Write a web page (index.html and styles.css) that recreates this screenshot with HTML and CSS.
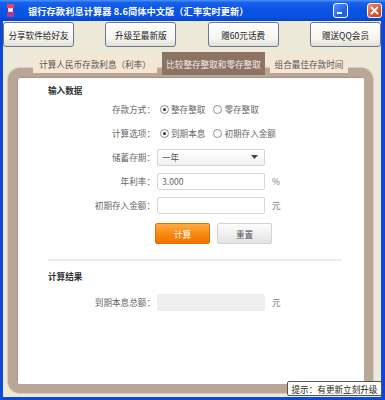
FILE: index.html
```html
<!DOCTYPE html>
<html lang="zh-CN">
<head>
<meta charset="utf-8">
<title>银行存款利息计算器</title>
<link rel="stylesheet" href="styles.css">
</head>
<body>
<div class="window">
  <div class="titlebar">
    <svg class="app-icon" viewBox="0 0 7 13" width="7" height="13">
      <rect x="0" y="0" width="7" height="4" fill="#e8485a"/>
      <rect x="1" y="4" width="5" height="4" fill="#f7c6d6"/>
      <rect x="0" y="8" width="7" height="5" fill="#b23a8c"/>
      <rect x="2" y="5" width="3" height="2" fill="#ffffff"/>
    </svg>
    <span class="title">银行存款利息计算器 8.6简体中文版（汇率实时更新）</span>
    <div class="win-btns">
      <span class="win-btn min"><svg viewBox="0 0 13 13" width="13" height="13"><rect x="3" y="8" width="5" height="2" fill="#fff"/></svg></span>
      <span class="win-btn close"><svg viewBox="0 0 13 13" width="13" height="13"><path d="M3.5 3.5 L9.5 9.5 M9.5 3.5 L3.5 9.5" stroke="#fff" stroke-width="1.8" stroke-linecap="round"/></svg></span>
    </div>
  </div>
  <div class="client">
    <div class="toolbar">
      <button class="tool-btn">分享软件给好友</button>
      <button class="tool-btn">升级至最新版</button>
      <button class="tool-btn">赠60元话费</button>
      <button class="tool-btn">赠送QQ会员</button>
    </div>
    <div class="tabs">
      <div class="tab tab-wide">计算人民币存款利息（利率）</div>
      <div class="tab tab-active">比较整存整取和零存整取</div>
      <div class="tab tab-narrow">组合最佳存款时间</div>
    </div>
    <div class="panel">
      <div class="section-title">输入数据</div>
      <div class="form">
        <div class="label">存款方式：</div>
        <div class="radios">
          <span class="radio checked"><i></i>整存整取</span>
          <span class="radio"><i></i>零存整取</span>
        </div>
        <div class="label">计算选项：</div>
        <div class="radios">
          <span class="radio checked"><i></i>到期本息</span>
          <span class="radio"><i></i>初期存入金额</span>
        </div>
        <div class="label">储蓄存期：</div>
        <div class="select"><span>一年</span><svg viewBox="0 0 7 4" width="7" height="4"><path d="M0 0 H7 L3.5 4 Z" fill="#444"/></svg></div>
        <div class="label">年利率：</div>
        <div class="with-unit"><span class="input">3.000</span><span class="unit">%</span></div>
        <div class="label">初期存入金额：</div>
        <div class="with-unit"><span class="input"></span><span class="unit">元</span></div>
      </div>
      <div class="actions">
        <span class="btn btn-primary">计算</span>
        <span class="btn btn-default">重置</span>
      </div>
      <div class="divider"></div>
      <div class="section-title result-title">计算结果</div>
      <div class="form result-form">
        <div class="label">到期本息总额：</div>
        <div class="with-unit"><span class="input input-readonly"></span><span class="unit">元</span></div>
      </div>
    </div>
  </div>
  <div class="tip">提示：有更新立刻升级</div>
</div>
</body>
</html>
```
FILE: styles.css
```css
* { box-sizing: border-box; }
html, body { margin: 0; padding: 0; }
body {
  width: 385px;
  height: 400px;
  overflow: hidden;
  font-family: "Noto Sans CJK SC", "Noto Sans", sans-serif;
  font-size: 8.6px;
  line-height: 12px;
  color: #555;
  background: #fff;
}
.window {
  position: relative;
  width: 385px;
  height: 400px;
  display: flex;
  flex-direction: column;
}
.titlebar {
  flex: none;
  height: 21px;
  display: flex;
  align-items: center;
  padding-left: 7px;
  background: linear-gradient(to bottom, #4d93f7 0%, #1a62ea 12%, #0a54e4 45%, #0a52e0 80%, #0843cf 100%);
}
.app-icon { display: block; }
.title {
  margin-left: 14px;
  color: #fff;
  font-size: 9.2px;
  font-weight: bold;
  white-space: nowrap;
  letter-spacing: 0.1px;
}
.win-btns {
  margin-left: auto;
  display: flex;
  gap: 19px;
  padding-right: 3px;
}
.win-btn {
  width: 15px;
  height: 15px;
  border: 1px solid #fff;
  border-radius: 3px;
  display: flex;
}
.win-btn.min { background: linear-gradient(135deg, #5a92f8, #2563e6 60%, #1c56d8); }
.win-btn.close { background: linear-gradient(135deg, #f08a6e, #dc5a38 55%, #c3401f); }
.client {
  flex: 1;
  display: flex;
  flex-direction: column;
  background: #ece9d8;
  border-left: 3px solid #0f47d9;
  border-right: 4px solid #0f47d9;
  border-bottom: 3px solid #0f47d9;
}
.toolbar {
  flex: none;
  height: 26px;
  padding-top: 1px;
  display: flex;
  justify-content: space-between;
}
.tool-btn {
  width: 71px;
  height: 25px;
  padding: 0;
  font: inherit;
  color: #222;
  border: 1px solid #6a7892;
  border-radius: 3px;
  background: linear-gradient(to bottom, #ffffff 0%, #f5f4ee 70%, #e2ded0 100%);
}
.tabs {
  position: relative;
  z-index: 1;
  flex: none;
  height: 23px;
  margin-top: 5px;
  padding-left: 30px;
  display: flex;
  align-items: center;
}
.tab {
  height: 18px;
  display: flex;
  align-items: center;
  justify-content: center;
  background: #f5e7d4;
  color: #555;
  white-space: nowrap;
}
.tab-wide { width: 124px; }
.tab-active {
  width: 103px;
  height: 23px;
  margin-left: 5px;
  background: #8c7364;
  color: #f2ebe4;
}
.tab-narrow { width: 78px; margin-left: 5px; }
.panel {
  flex: 1;
  margin: -7px 8px 4px 5px;
  border: 9px solid #b9a696;
  border-radius: 12px;
  background: #fff;
  box-shadow: 0 0 0 1px #d8ccbf, inset 1px 1px 0 #a9937f;
}
.section-title {
  padding: 7px 0 0 31px;
  font-weight: bold;
  color: #333;
}
.form {
  display: grid;
  grid-template-columns: 138px auto;
  column-gap: 2px;
  grid-auto-rows: 24px;
  align-items: center;
  margin-top: 1px;
}
.label {
  text-align: right;
  color: #666;
  white-space: nowrap;
}
.radios {
  display: flex;
  align-items: center;
  gap: 8px;
  padding-left: 3px;
  color: #666;
}
.radio {
  display: flex;
  align-items: center;
  gap: 2px;
}
.radio i {
  width: 9px;
  height: 9px;
  border: 1px solid #8c8c8c;
  border-radius: 50%;
  display: flex;
  align-items: center;
  justify-content: center;
  background: #fff;
}
.radio.checked i::after {
  content: "";
  width: 3px;
  height: 3px;
  border-radius: 50%;
  background: #333;
}
.select {
  width: 108px;
  height: 17px;
  border: 1px solid #d3d3d3;
  border-radius: 2px;
  background: linear-gradient(to bottom, #ffffff, #f1f1f1);
  display: flex;
  align-items: center;
  justify-content: space-between;
  padding: 0 6px 0 4px;
  color: #555;
}
.with-unit {
  display: flex;
  align-items: center;
  gap: 7px;
}
.input {
  width: 108px;
  height: 17px;
  border: 1px solid #d6d6d6;
  border-radius: 2px;
  padding-left: 4px;
  display: flex;
  align-items: center;
  color: #666;
  background: #fff;
}
.input-readonly {
  background: #eeeeee;
  border-color: #eeeeee;
}
.unit { color: #777; }
.actions {
  display: flex;
  gap: 7px;
  padding-left: 138px;
  margin-top: 6px;
}
.btn {
  width: 55px;
  height: 21px;
  border-radius: 2px;
  display: flex;
  align-items: center;
  justify-content: center;
}
.btn-primary {
  color: #fff;
  background: linear-gradient(to bottom, #ffab45 0%, #f98a12 50%, #ee7200 100%);
  border: 1px solid #e57000;
}
.btn-default {
  color: #555;
  background: linear-gradient(to bottom, #fdfdfd 0%, #eeeeee 60%, #e2e2e2 100%);
  border: 1px solid #d2d2d2;
}
.divider {
  height: 2px;
  margin: 15px 22px 0 31px;
  background: #ededed;
}
.result-title { padding-top: 9px; }
.result-form { margin-top: 8px; }
.tip {
  position: absolute;
  right: 3px;
  bottom: 4px;
  width: 95px;
  height: 15px;
  border: 1px solid #555;
  border-radius: 2px;
  background: #fffffb;
  color: #222;
  display: flex;
  align-items: center;
  justify-content: center;
  white-space: nowrap;
}
```
